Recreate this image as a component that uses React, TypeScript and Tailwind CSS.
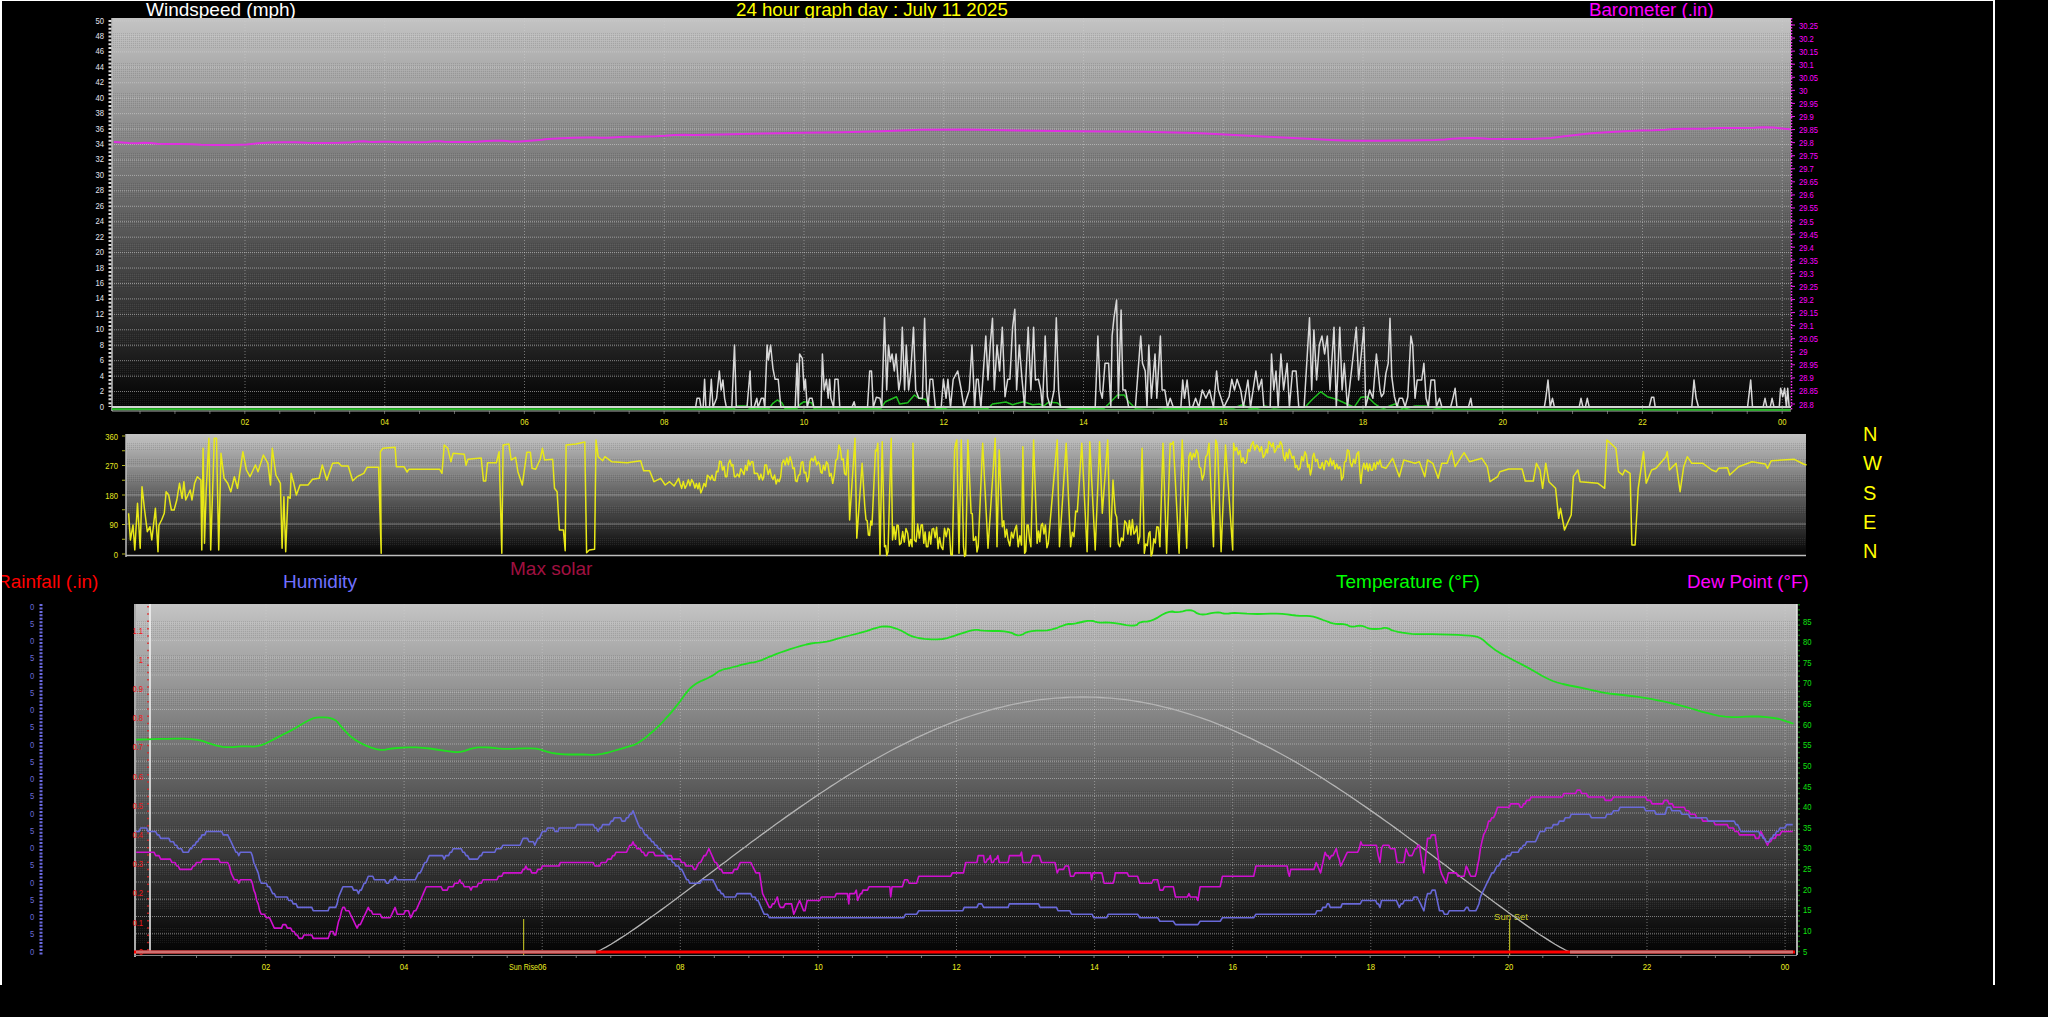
import React from "react";

type Pt = [number, number];

const parse = (s: string): Pt[] =>
  s
    .trim()
    .split(/\s+/)
    .map((p) => p.split(",").map(Number) as Pt);

// zoom-read coordinates, "x,y x,y" -> page px
const pts = (s: string, ox: number, oy: number) =>
  parse(s)
    .map(([x, y]) => `${(ox + x / 2.24).toFixed(1)},${(oy + y / 3).toFixed(1)}`)
    .join(" ");

// rounds the corners off the hand read lines
const smooth = (s: string, rounds = 2) => {
  let p = parse(s);
  for (let r = 0; r < rounds; r++) {
    const next: Pt[] = [p[0]];
    for (let i = 0; i < p.length - 1; i++) {
      const [ax, ay] = p[i];
      const [bx, by] = p[i + 1];
      next.push([ax * 0.75 + bx * 0.25, ay * 0.75 + by * 0.25], [ax * 0.25 + bx * 0.75, ay * 0.25 + by * 0.75]);
    }
    next.push(p[p.length - 1]);
    p = next;
  }
  return p.map(([x, y]) => `${x.toFixed(1)},${y.toFixed(1)}`).join(" ");
};

// the station logs whole numbers, so humidity and dew point come out as stairs
const stair = (s: string, q = 3.45) => {
  const p = parse(s);
  const out: string[] = [];
  for (let i = 0; i < p.length - 1; i++) {
    const [ax, ay] = p[i];
    const [bx, by] = p[i + 1];
    const n = Math.max(1, Math.round((bx - ax) / 1.5));
    for (let k = 0; k < n; k++) {
      const t = k / n;
      out.push(`${(ax + (bx - ax) * t).toFixed(1)},${(Math.round((ay + (by - ay) * t) / q) * q).toFixed(1)}`);
    }
  }
  return out.join(" ");
};

// fills long segments of the wind direction with the small swings the sensor shows
const wobble = [1, -0.6, 0.8, -1, 0.4, -0.8, 0.9, -0.3, 0.6, -0.9];
const noisy = (s: string) => {
  const p = parse(s);
  const out: Pt[] = [];
  let w = 0;
  for (let i = 0; i < p.length - 1; i++) {
    const [ax, ay] = p[i];
    const [bx, by] = p[i + 1];
    out.push(p[i]);
    const n = Math.floor((bx - ax) / 4);
    if (n > 0 && Math.abs(by - ay) < 120) {
      const amp = ay > 690 ? 28 : 14;
      for (let k = 1; k <= n; k++) {
        const t = k / (n + 1);
        out.push([ax + (bx - ax) * t, ay + (by - ay) * t + wobble[w++ % 10] * amp]);
      }
    }
  }
  out.push(p[p.length - 1]);
  return out.map(([x, y]) => `${x.toFixed(1)},${y.toFixed(1)}`).join(" ");
};

const baroLine = smooth(
  [
    pts("255,426 300,430 330,428 360,432 420,432 460,435 540,435 590,428 650,426 700,429 780,428 810,423 830,426 860,425 900,427 950,427 980,423 1000,426 1060,426 1100,422 1130,422 1150,426 1210,420 1225,417 1270,414 1330,412 1350,414 1400,410 1440,410 1480,408 1520,404 1568,405", 0, 0),
    "784,133 862,132 940,129 1045,131 1176,132 1254,136 1332,140",
    pts("0,422 100,422 150,421 210,420 240,415 290,414 320,417 440,417 500,406 560,398 640,392 700,390 740,386 800,386 820,384 900,384 940,381 990,388", 1348, 0),
  ].join(" "),
  1,
);

const windLine = [
  "112,407 680,407",
  pts("0,382 35,382 38,355 44,355 47,382 52,382 55,298 58,382 66,382 70,298 74,382 82,355 88,273 92,330 96,300 100,355 104,382 116,382 122,195 126,382 150,382 157,273 160,382 166,382 172,355 175,382 182,355 187,355 190,382 195,195 198,240 203,195 208,265 213,298 220,298 226,382 258,382 262,250 265,382 268,222 274,235 278,330 281,298 285,382 290,355 296,355 300,382 316,382 319,222 323,330 328,298 332,355 335,298 338,355 344,382 347,298 354,298 358,382 385,382 390,365 393,382 420,382 425,273 429,273 433,382 440,352 448,355 452,382 458,113 463,330 467,195 471,245 475,222 480,273 484,222 490,330 494,298 498,142 503,330 507,195 512,330 517,273 523,142 528,330 535,355 543,355 548,115 552,330 556,382 560,298 566,298 572,382 585,382 590,298 596,355 600,298 606,382 612,298 622,273 630,330 636,382 648,330 654,195 660,382 664,298 668,298 674,382 685,168 690,300 695,190 700,115 704,330 710,195 716,273 722,142 728,350 734,298 739,298 745,142 750,88 754,330 760,195 766,298 772,382 780,142 786,330 792,142 796,300 803,298 808,330 812,382 818,168 823,350 830,382 838,330 843,113 848,330 852,382 870,382 930,382 936,168 941,330 946,355 952,250 960,250 965,382 968,168 972,115 978,60 982,355 988,90 992,330 998,330 1005,382 1020,382 1032,168 1036,250 1042,273 1046,382 1050,195 1056,355 1064,222 1068,355 1076,168 1080,330 1086,330 1092,382 1098,355 1105,382 1122,382 1126,300 1130,355 1136,300 1142,382 1148,382 1155,355 1162,382 1170,330 1178,355 1186,330 1195,382 1202,273 1206,330 1212,355 1218,382 1230,350 1236,298 1242,330 1248,298 1256,330 1262,382 1272,300 1278,382 1290,273 1296,330 1303,298 1308,382 1322,382 1325,222 1330,330 1335,273 1340,382 1346,222 1352,330 1360,250 1365,382 1372,273 1380,273 1386,382 1398,382 1410,113 1415,330 1420,150 1426,300 1432,195 1438,168 1444,222 1450,168 1456,330 1465,142 1470,382 1478,142 1483,330 1488,250 1495,382 1515,142 1520,300 1526,222 1532,142 1536,380 1545,330 1552,355 1560,222 1568,330", 680, 280),
  pts("75,1190 80,1180 85,1120 90,1090 94,955 98,1130 104,1190 110,1220 115,1195 122,1195 128,1220 134,1190 141,1008 145,1035 150,1195 155,1140 165,1140 170,1090 175,1195 180,1220 186,1140 194,1140 198,1220 205,1195 210,1220 230,1220 235,1195 240,1165 244,1220 270,1220 275,1195 278,1220 440,1220 443,1195 448,1140 453,1220 458,1195 462,1220 518,1220 522,1195 526,1220 532,1220 536,1195 540,1220 675,1220 680,1192 685,1192 688,1220 770,1220 775,1140 780,1195 785,1220 895,1220 902,1140 906,1220 930,1220 934,1195 938,1220 946,1220 950,1195 954,1220 966,1220 969,1165 974,1190 978,1165 982,1220 985,1165 988,1220", 1348, 0),
].join(" ");

const gustLine = [
  "112,409 680,409",
  pts("0,388 120,386 130,378 150,378 155,385 190,385 200,385 208,370 218,360 228,368 235,385 262,385 270,372 278,365 295,368 300,385 315,383 450,385 460,365 485,350 492,372 510,368 525,345 535,355 550,358 560,380 575,385 595,385 600,382 690,385 700,372 730,366 745,374 760,368 770,365 790,374 805,372 815,378 825,367 845,368 855,380 875,385 950,385 960,372 980,345 995,345 1005,365 1020,385 1060,382 1100,386 1240,384 1260,374 1275,384 1290,386 1310,378 1330,384 1360,380 1400,382 1415,360 1435,335 1450,350 1470,358 1490,370 1510,382 1525,352 1540,350 1555,370 1568,382", 680, 280),
  pts("80,1225 105,1212 125,1228 150,1218 175,1218 210,1228 990,1230", 1348, 0),
].join(" ");

const dirLine = [
  pts("288,280 292,360 298,315 302,390 308,250 314,385 318,200 324,270 330,335 336,320 340,360 348,265 354,395 356,316 362,300 368,280 372,215 378,225 384,270 390,270 396,240 402,190 408,235 412,185 416,240 426,210 430,240 436,190 442,170 450,180 452,390 455,85 458,370 462,210 468,55 472,390 480,55 485,55 490,390 495,100 502,175 510,190 517,215 525,170 532,205 544,95 552,150 560,170 572,135 578,155 590,105 600,130 606,195 610,85 618,165 628,190 632,385 636,230 640,395 645,230 650,235 652,160 658,190 664,225 672,195 690,195 700,178 715,175 722,135 732,180 745,130 758,128 765,138 780,138 790,182 800,170 815,160 822,142 848,142 854,400 852,95 858,85 885,82 888,140 905,140 912,156 916,148 985,148 990,160 995,75 1003,85 1010,125 1015,100 1040,103 1044,136 1048,118 1078,114 1083,183 1088,183 1092,128 1112,128 1118,95 1124,400 1127,75 1140,72 1145,120 1155,112 1160,155 1170,195 1180,97 1188,97 1192,145 1200,148 1210,118 1215,85 1220,120 1238,118 1242,205 1248,215 1253,330 1262,330 1266,392 1268,75 1290,72 1310,66 1314,398 1320,390 1332,388 1335,60 1340,110 1350,122 1355,110 1370,125 1405,128 1435,122 1442,152 1455,152 1465,185 1480,175 1490,195 1500,185 1510,198 1520,175", 0, 420),
  pts(noisy("0,610 15,615 30,608 50,628 65,590 75,600 92,545 105,590 112,540 125,590 140,575 160,545 170,580 185,600 190,555 205,590 222,605 232,540 250,545 262,605 275,545 285,605 295,535 310,545 318,580 328,545 342,610 356,495 372,585 376,510 380,720 392,475 396,775 408,550 414,680 422,765 430,735 438,510 443,490 448,825 453,485 458,800 466,815 473,475 476,780 486,735 495,790 510,760 520,800 522,490 525,780 540,735 552,800 568,745 585,800 600,745 610,825 615,510 620,480 625,820 630,480 635,800 640,825 645,480 652,700 660,780 668,800 678,490 690,805 700,600 706,475 710,800 715,510 722,740 735,780 750,750 765,795 768,500 772,820 780,735 786,800 792,480 800,790 812,730 825,790 845,480 850,800 865,490 875,800 890,695 900,490 912,815 918,485 930,810 940,485 946,700 958,480 964,800 970,600 975,700 985,800 1000,730 1020,755 1030,770 1035,505 1040,820 1050,760 1058,820 1068,740 1075,800 1082,490 1090,820 1098,490 1105,485 1118,820 1125,480 1135,805 1140,530 1160,520 1170,600 1185,490 1195,800 1200,480 1205,520 1212,815 1222,495 1238,810 1240,490 1265,550 1280,495 1295,500 1310,525 1322,490 1335,510 1345,485 1352,530 1368,520 1385,570 1400,515 1412,585 1420,520 1435,565 1450,545 1478,560 1482,600 1495,510 1505,560 1520,515 1525,610 1532,550 1548,570 1568,540"), 680, 280),
  pts("75,140 85,145 100,115 115,170 125,120 150,130 160,125 172,170 178,120 190,130 202,175 210,130 222,130 232,92 240,140 260,98 272,125 300,115 312,140 318,185 335,170 340,155 360,147 390,147 397,183 415,183 422,130 430,150 436,205 443,130 450,185 465,205 472,295 476,265 485,330 500,285 505,170 515,150 520,185 560,190 575,205 580,60 600,85 606,155 615,165 620,150 632,160 636,375 643,375 650,205 662,95 668,190 680,150 690,145 712,110 715,95 720,150 735,130 744,215 752,140 760,110 770,130 795,130 815,150 825,155 830,145 850,143 855,165 875,140 905,125 935,132 940,145 948,122 1000,118 1020,132 1027,135", 1348, 420),
].join(" ");

const tempLine = smooth(
  [
    pts("305,68 365,65 440,65 480,85 510,92 545,87 580,90 620,62 660,35 690,10 710,0 750,3 770,40 800,75 850,102 880,93 940,90 1000,102 1030,107 1060,92 1090,90 1130,97 1200,92 1230,107 1270,113 1300,112 1340,115 1400,92 1430,80 1470,35 1495,0", 0, 717),
    pts("0,305 15,275 35,250 70,230 90,210 115,203 150,190 175,185 200,170 240,150 290,130 325,127 355,115 410,97 435,85 460,77 490,87 525,115 585,120 620,105 660,87 680,93 735,93 760,110 780,92 830,92 865,72 880,72 920,60 935,68 965,67 1020,80 1030,65 1055,65 1095,32 1115,38 1145,27 1165,47 1205,35 1220,42 1245,38 1285,43 1345,40 1385,48 1415,47 1445,62 1465,72 1490,72 1505,82 1525,75 1545,87 1568,87", 680, 600),
    pts("85,622 105,635 150,643 175,642 260,645 295,650 315,675 340,700 400,740 440,772 470,790 540,808 570,818 610,824 650,830 700,842 750,858 800,878 850,893 915,888 960,895", 1348, 420),
    pts("975,10 998,20", 1348, 717),
  ].join(" "),
);

const humLine = stair(
  [
    pts("305,345 315,335 345,342 360,362 375,365 385,375 410,403 422,403 440,375 462,345 490,342 510,357 525,400 535,413 545,403 562,403 575,460 585,495 600,505 618,540 640,540 650,550 670,570 695,570 705,582 735,582 740,570 752,570 768,507 785,507 803,528 825,480 862,490 870,497 885,480 890,490 920,488 930,490 945,455 958,425 965,413 988,413 995,425 1015,400 1030,393 1040,410 1055,425 1070,425 1075,412 1105,405 1115,395 1130,385 1165,380 1175,363 1198,382 1215,345 1230,335 1250,340 1255,332 1285,335 1300,320 1325,320 1340,340 1350,322 1365,320 1380,300 1400,312 1418,282 1430,320 1445,355 1460,370 1475,395 1490,415 1520,450", 0, 717),
    pts("0,805 15,835 25,850 45,845 70,835 85,870 100,890 120,888 135,880 155,880 175,900 185,935 200,950 250,955 275,955 285,955 375,955 470,955 498,955 505,942 530,942 535,932 630,932 640,922 665,920 672,912 680,920 735,920 740,912 762,908 770,915 800,915 810,920 840,922 850,932 870,935 880,942 920,942 930,955 945,955 970,942 1025,942 1030,955 1070,955 1075,962 1105,962 1110,972 1160,972 1165,962 1210,962 1215,955 1285,955 1290,942 1420,942 1430,935 1450,915 1470,925 1490,912 1520,910 1535,900 1555,900 1568,920", 680, 600),
    pts("75,550 105,548 115,570 130,550 155,542 170,580 178,530 195,518 205,580 220,590 230,582 260,582 265,570 275,582 290,575 300,530 315,490 330,455 345,430 360,415 385,400 400,378 420,370 430,345 470,320 500,295 530,292 545,298 560,300 590,295 595,283 620,270 660,270 670,283 710,290 715,272 740,283 755,290 770,300 830,312 865,312 880,340 920,345 940,378 960,345 975,330 1000,318", 1348, 717),
  ].join(" "),
);

const dewLine = stair(
  [
    pts("305,410 315,403 345,408 360,425 385,432 410,462 425,462 440,440 460,425 490,430 510,440 525,485 535,495 545,485 562,485 575,550 585,590 600,600 618,635 640,625 655,640 670,665 695,650 705,665 735,668 740,645 752,650 768,568 785,590 800,635 825,575 835,590 862,600 870,605 885,575 890,590 915,585 920,600 935,570 945,540 958,505 985,505 995,522 1015,505 1030,492 1040,505 1055,515 1085,490 1110,485 1120,480 1135,465 1165,470 1178,450 1198,470 1215,450 1230,445 1250,450 1255,440 1285,440 1300,435 1325,435 1340,450 1350,435 1365,430 1380,410 1400,410 1418,375 1430,395 1445,415 1460,405 1475,420 1490,415 1520,428", 0, 717),
    pts("0,780 20,800 35,805 50,775 65,750 85,800 100,818 125,812 135,790 155,785 170,815 178,822 185,885 200,925 218,895 225,920 250,910 255,940 268,905 280,935 285,905 320,895 360,882 375,880 378,910 380,878 395,875 398,903 410,868 460,855 470,858 472,888 475,862 498,865 503,842 530,850 535,830 590,830 620,820 635,820 640,790 665,785 668,765 680,765 682,790 695,770 698,790 712,770 715,790 735,790 738,770 762,770 765,760 768,785 785,785 790,768 805,770 810,790 840,792 845,815 870,798 875,825 920,818 922,842 925,815 945,820 950,850 970,850 975,822 1025,825 1030,850 1070,842 1075,870 1105,855 1110,895 1140,885 1160,898 1165,865 1210,855 1215,828 1285,825 1290,802 1360,800 1365,830 1368,805 1420,808 1425,785 1435,815 1445,755 1455,775 1470,750 1480,795 1495,755 1518,755 1525,730 1545,740 1560,740 1568,785", 680, 600),
    pts("75,390 85,385 105,395 110,440 125,440 130,400 140,420 150,400 160,385 170,470 178,368 190,350 195,350 205,450 220,500 225,470 260,475 265,450 275,478 285,478 290,450 300,370 315,315 330,295 335,275 350,270 375,260 390,268 400,250 430,235 470,240 500,228 520,222 545,240 590,248 595,235 650,235 670,245 685,262 705,260 712,250 730,268 750,270 770,290 795,310 860,330 880,355 920,360 925,345 940,382 960,355 975,345 1000,345", 1348, 717),
  ].join(" "),
);

const range = (n: number) => Array.from({ length: n }, (_, i) => i);

// solar arc between sunrise and sunset of the day
const solarLine = range(196)
  .map((i) => {
    const t = i / 195;
    return `${(596 + t * 974).toFixed(1)},${(952 - 255 * Math.pow(Math.sin(Math.PI * t), 1.15)).toFixed(1)}`;
  })
  .join(" ");

const hours = ["02", "04", "06", "08", "10", "12", "14", "16", "18", "20", "22", "00"];
const baroLabels = range(30).map((i) => String(Number((30.25 - i * 0.05).toFixed(2))));
const tempLabels = range(17).map((i) => 85 - i * 5);

function PlotDefs({ id }: { id: string }) {
  return (
    <defs>
      <linearGradient id={`${id}-bg`} x1="0" y1="0" x2="0" y2="1">
        <stop offset="0" stopColor="#c4c4c4" />
        <stop offset="0.35" stopColor="#7e7e7e" />
        <stop offset="0.6" stopColor="#4c4c4c" />
        <stop offset="0.8" stopColor="#2a2a2a" />
        <stop offset="0.95" stopColor="#0a0a0a" />
        <stop offset="1" stopColor="#050505" />
      </linearGradient>
      <pattern id={`${id}-dots`} width="2" height="2" patternUnits="userSpaceOnUse">
        <rect width="1" height="1" fill="#fff" opacity="0.07" />
        <rect x="1" y="1" width="1" height="1" fill="#000" opacity="0.1" />
      </pattern>
    </defs>
  );
}

function Plot({ id, x, y, w, h, band = 15 }: { id: string; x: number; y: number; w: number; h: number; band?: number }) {
  return (
    <>
      <rect x={x} y={y} width={w} height={h} fill={`url(#${id}-bg)`} />
      {range(Math.floor(h / band / 2)).map((i) => (
        <rect key={i} x={x} y={y + band + i * band * 2} width={w} height={band} fill={`url(#${id}-dots)`} />
      ))}
    </>
  );
}

function Line({ points, color, width = 1.4 }: { points: string; color: string; width?: number }) {
  return <polyline points={points} fill="none" stroke={color} strokeWidth={width} strokeLinejoin="round" />;
}

// the chart labels are a squeezed small sans
function Label({ x, y, text, fill, anchor = "start" }: { x: number; y: number; text: string; fill: string; anchor?: "start" | "middle" | "end" }) {
  const w = [...text].reduce((sum, c) => sum + (c === "." ? 2 : 4.25), 0);
  return (
    <text x={x} y={y} fontSize="9.5" textLength={w} lengthAdjust="spacingAndGlyphs" textAnchor={anchor} dominantBaseline="central" fill={fill}>
      {text}
    </text>
  );
}

function WindChart() {
  return (
    <svg viewBox="2 18 1991 412" className="h-[412px] w-[1991px] shrink-0">
      <PlotDefs id="wind" />
      <Plot id="wind" x={112} y={18} w={1679} h={393} />
      {range(25).map((i) => (
        <line key={i} x1={112} x2={1791} y1={21 + i * 15.44} y2={21 + i * 15.44} stroke="#d0d0d0" strokeOpacity="0.6" strokeDasharray="1 1" />
      ))}
      {hours.map((h, i) => (
        <line key={h} x1={245 + i * 139.75} x2={245 + i * 139.75} y1={18} y2={411} stroke="#d0d0d0" strokeOpacity="0.5" strokeDasharray="1 2" />
      ))}
      {range(48).map((i) => (
        <line key={i} x1={140 + i * 34.94} x2={140 + i * 34.94} y1={411} y2={414} stroke="#666" />
      ))}
      <line x1={112} x2={112} y1={18} y2={411} stroke="#bbb" strokeWidth="1.5" />
      <line x1={110} x2={110} y1={20} y2={407} stroke="#ddd" strokeWidth="3" strokeDasharray="2 1.86" />
      {range(26).map((i) => (
        <Label key={i} x={104} y={406 - i * 15.44} text={String(i * 2)} anchor="end" fill="#e4e4ee" />
      ))}
      {hours.map((h, i) => (
        <Label key={h} x={245 + i * 139.75} y={421} text={h} anchor="middle" fill="#e8e820" />
      ))}
      <line x1={112} x2={1791} y1={411} y2={411} stroke="#aaa" />
      <line x1={1791.5} x2={1791.5} y1={18} y2={411} stroke="#ff30ff" strokeDasharray="1.5 1.5" strokeWidth="1.5" />
      {baroLabels.map((l, i) => (
        <g key={l}>
          <line x1={1791} x2={1795} y1={25 + i * 13.07} y2={25 + i * 13.07} stroke="#e020e0" />
          <Label x={1799} y={25 + i * 13.07} text={l} fill="#ff00ff" />
        </g>
      ))}
      <Line points={baroLine} color="#e030e0" width={2} />
      <line x1={112} x2={1791} y1={409.5} y2={409.5} stroke="#58b058" strokeWidth="1.5" />
      <Line points={gustLine} color="#20c020" width={1.5} />
      <line x1={112} x2={1791} y1={407} y2={407} stroke="#c8c8c8" strokeWidth="2.2" />
      <Line points={windLine} color="#d8d8d8" width={1.5} />
    </svg>
  );
}

function DirectionChart() {
  return (
    <svg viewBox="2 430 1840 130" className="h-[130px] w-[1840px] shrink-0">
      <PlotDefs id="dir" />
      <Plot id="dir" x={126} y={434} w={1680} h={122} band={8} />
      {[466, 495, 524].map((y) => (
        <line key={y} x1={126} x2={1806} y1={y} y2={y} stroke="#c8c8c8" strokeOpacity="0.5" />
      ))}
      <line x1={126} x2={1806} y1={555.5} y2={555.5} stroke="#bdbdbd" strokeWidth="1.5" />
      <line x1={126} x2={126} y1={434} y2={557} stroke="#bdbdbd" strokeWidth="1.5" />
      {range(9).map((i) => (
        <line key={i} x1={122} x2={125} y1={436 + i * 14.75} y2={436 + i * 14.75} stroke="#b0b020" />
      ))}
      {["360", "270", "180", "90", "0"].map((l, i) => (
        <Label key={l} x={118} y={436 + i * 29.5} text={l} anchor="end" fill="#e8e820" />
      ))}
      <Line points={dirLine} color="#e8e818" width={1.5} />
    </svg>
  );
}

function ClimateChart() {
  return (
    <svg viewBox="2 600 1991 385" className="h-[385px] w-[1991px] shrink-0">
      <PlotDefs id="clim" />
      <Plot id="clim" x={134} y={604} w={1663} h={351} band={17} />
      {range(20).map((i) => (
        <line key={i} x1={134} x2={1797} y1={606 + i * 17.25} y2={606 + i * 17.25} stroke="#d0d0d0" strokeOpacity="0.55" strokeDasharray="1 1" />
      ))}
      {hours.map((h, i) => (
        <line key={h} x1={266 + i * 138.1} x2={266 + i * 138.1} y1={604} y2={955} stroke="#d0d0d0" strokeOpacity="0.5" strokeDasharray="1 2" />
      ))}
      {range(48).map((i) => (
        <line key={i} x1={162 + i * 34.52} x2={162 + i * 34.52} y1={955} y2={958} stroke="#777" />
      ))}
      {/* humidity axis, only the last digit shows */}
      <line x1={41} x2={41} y1={604} y2={955} stroke="#6a6ae0" strokeWidth="3" strokeDasharray="2 1.45" />
      {range(21).map((i) => (
        <Label key={i} x={32} y={606 + i * 17.25} text={i % 2 === 0 ? "0" : "5"} anchor="middle" fill="#6a6ad8" />
      ))}
      <line x1={135} x2={135} y1={604} y2={957} stroke="#aaa" strokeWidth="2" />
      {/* rainfall axis */}
      <line x1={148} x2={148} y1={606} y2={952} stroke="#e02020" strokeWidth="1.5" strokeDasharray="1.5 5.8" />
      {["1.1", "1", "0.9", "0.8", "0.7", "0.6", "0.5", "0.4", "0.3", "0.2", "0.1", "0"].map((l, i) => (
        <Label key={l} x={143} y={630 + i * 29.2} text={l} anchor="end" fill="#f01818" />
      ))}
      <line x1={150} x2={150} y1={604} y2={952} stroke="#f4f4f4" strokeWidth="1.5" />
      {/* temperature axis */}
      <line x1={1797} x2={1797} y1={604} y2={955} stroke="#e8e8e8" strokeWidth="1.5" />
      <line x1={1799} x2={1799} y1={604} y2={955} stroke="#10d010" strokeDasharray="1.5 3.6" />
      {tempLabels.map((l, i) => (
        <Label key={l} x={1803} y={621 + i * 20.63} text={String(l)} fill="#10e010" />
      ))}
      <line x1={134} x2={1797} y1={955.5} y2={955.5} stroke="#888" />
      {hours.map((h, i) => (
        <Label key={h} x={266 + i * 138.1} y={966} text={h} anchor="middle" fill="#f0f020" />
      ))}
      <line x1={523.6} x2={523.6} y1={919} y2={955} stroke="#b0b020" strokeWidth="1.2" />
      <line x1={1509.6} x2={1509.6} y1={919} y2={955} stroke="#b0b020" strokeWidth="1.2" />
      <text x={509} y={966} fontSize="9.5" textLength={29} lengthAdjust="spacingAndGlyphs" dominantBaseline="central" fill="#e8e820">
        Sun Rise
      </text>
      <text x={1511} y={916} fontSize="9.5" textAnchor="middle" dominantBaseline="central" fill="#c8c820">
        Sun Set
      </text>
      <Line points={tempLine} color="#20e020" width={1.8} />
      <Line points={solarLine} color="#b4b4b4" width={1.3} />
      <Line points={dewLine} color="#d010d0" width={1.6} />
      <Line points={humLine} color="#6868d8" width={1.6} />
      <line x1={134} x2={1795} y1={952} y2={952} stroke="#ff0000" strokeWidth="3" />
      <line x1={136} x2={596} y1={952} y2={952} stroke="#d07070" strokeWidth="3" />
      <line x1={1570} x2={1793} y1={952} y2={952} stroke="#d07070" strokeWidth="3" />
    </svg>
  );
}

export default function App() {
  return (
    <div className="h-[1017px] w-[2048px] overflow-hidden bg-black font-['Liberation_Sans',sans-serif] text-[19px]">
      <div className="flex h-[985px] w-[1995px] flex-col overflow-hidden border-x-2 border-t border-white">
        <div className="flex h-[17px] shrink-0 whitespace-nowrap leading-[18px]">
          <span className="ml-[144px] w-[590px] text-white">Windspeed (mph)</span>
          <span className="w-[853px] text-[18.7px] text-[#ffff00]">24 hour graph day : July 11 2025</span>
          <span className="text-[18.7px] text-[#ff00ff]">Barometer (.in)</span>
        </div>

        <WindChart />

        <div className="flex h-[130px] shrink-0">
          <DirectionChart />
          <div className="-mt-[10px] flex flex-col pl-[21px] text-[20px] leading-[29.25px] text-[#ffff00]">
            {["N", "W", "S", "E", "N"].map((d, i) => (
              <span key={i}>{d}</span>
            ))}
          </div>
        </div>

        <div className="flex h-[40px] shrink-0 items-start whitespace-nowrap leading-[18px]">
          <span className="-ml-[5px] mt-[13px] w-[286px] shrink-0 text-[#ff0000]">Rainfall (.in)</span>
          <span className="mt-[13px] w-[227px] shrink-0 text-[#7070ff]">Humidity</span>
          <span className="w-[826px] shrink-0 text-[#a01040]">Max solar</span>
          <span className="mt-[13px] w-[351px] shrink-0 text-[#00ff00]">Temperature (°F)</span>
          <span className="mt-[13px] shrink-0 text-[18.7px] text-[#ff00ff]">Dew Point (°F)</span>
        </div>

        <ClimateChart />
      </div>
    </div>
  );
}
